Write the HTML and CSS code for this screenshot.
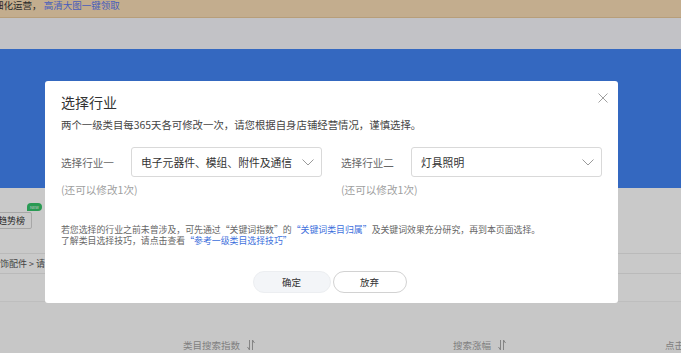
FILE: index.html
```html
<!DOCTYPE html>
<html lang="zh-CN">

<head>
	<meta charset="utf-8">
	<title>选择行业</title>
	<link rel="stylesheet" href="styles.css">
</head>

<body>

	<div class="page">
		<div class="notice">
			<span class="notice-text">细化运营，</span>
			<a class="notice-link" href="#">高清大图一键领取</a>
		</div>
		<div class="nav"></div>
		<div class="hero"></div>

		<div class="tools">
			<button class="trend-btn">趋势榜<span class="badge-new">NEW</span></button>
		</div>

		<div class="crumbs">服饰配件 &gt; 请选择类目</div>

		<div class="table-head">
			<div class="th"></div>
			<div class="th">类目搜索指数
				<svg class="sort-icon" width="10" height="12" viewBox="0 0 10 12">
					<path d="M3.5 1v10M3.5 11L1.5 8M6.5 11V1M6.5 1l2 3" fill="none" stroke="#a8a8a8" stroke-width="1" />
				</svg>
			</div>
			<div class="th">搜索涨幅
				<svg class="sort-icon" width="10" height="12" viewBox="0 0 10 12">
					<path d="M3.5 1v10M3.5 11L1.5 8M6.5 11V1M6.5 1l2 3" fill="none" stroke="#a8a8a8" stroke-width="1" />
				</svg>
			</div>
			<div class="th">点击率</div>
		</div>
	</div>

	<!-- modal: pick the two first-level industries -->
	<div class="mask">
		<div class="dialog">
			<h2 class="dialog-title">选择行业</h2>
			<span class="close-btn">
				<svg width="10" height="10" viewBox="0 0 10 10">
					<path d="M0.5 0.5l9 9M9.5 0.5l-9 9" stroke="#a0a0a0" stroke-width="1" />
				</svg>
			</span>
			<p class="dialog-sub">两个一级类目每365天各可修改一次，请您根据自身店铺经营情况，谨慎选择。</p>

			<div class="field-row select-row">
				<div class="field">
					<span class="field-label">选择行业一</span>
					<div class="select">
						<span>电子元器件、模组、附件及通信</span>
						<svg class="chevron" width="12" height="7" viewBox="0 0 12 7">
							<polyline points="0.5,0.5 6,6 11.5,0.5" fill="none" stroke="#9a9a9a" stroke-width="1" />
						</svg>
					</div>
				</div>
				<div class="field">
					<span class="field-label">选择行业二</span>
					<div class="select">
						<span>灯具照明</span>
						<svg class="chevron" width="12" height="7" viewBox="0 0 12 7">
							<polyline points="0.5,0.5 6,6 11.5,0.5" fill="none" stroke="#9a9a9a" stroke-width="1" />
						</svg>
					</div>
				</div>
			</div>

			<div class="field-row hint-row">
				<p class="hint">(还可以修改1次)</p>
				<p class="hint">(还可以修改1次)</p>
			</div>

			<div class="note">
				<p>若您选择的行业之前未曾涉及，可先通过“关键词指数”的<a href="#">“关键词类目归属”</a>及关键词效果充分研究，再到本页面选择。</p>
				<p>了解类目选择技巧，请点击查看<a href="#">“参考一级类目选择技巧”</a></p>
			</div>

			<div class="dialog-btns">
				<button class="btn btn-ok">确定</button>
				<button class="btn btn-cancel">放弃</button>
			</div>
		</div>
	</div>

</body>

</html>
```

FILE: styles.css
```css
body {
	margin: 0;
	padding: 0;
	width: 681px;
	height: 353px;
	overflow: hidden;
	background-color: #fff;
	font-family: "Noto Sans CJK SC", "Noto Sans", sans-serif;
	color: #333;
}

p {
	margin: 0;
}

a {
	text-decoration: none;
}

/* *** background page *** */
.page {
	width: 100%;
}

.notice {
	height: 18px;
	box-sizing: border-box;
	background-color: #f8dcb4;
	border-bottom: 1px solid #e9c99b;
	font-size: 9.5px;
	line-height: 10px;
	white-space: nowrap;
	overflow: hidden;
}

.notice-text {
	margin-left: -6px;
	color: #333;
}

.notice-link {
	color: #5b77ee;
}

.nav {
	height: 31px;
	background-color: #f7f6fb;
}

.hero {
	height: 139px;
	background-color: #4285f4;
}

.tools {
	padding-top: 17px;
	height: 17px;
}

.trend-btn {
	position: relative;
	margin-left: -9px;
	height: 17px;
	padding: 0 6px;
	border: 1px solid #d4d4d4;
	border-radius: 2px;
	background-color: #fff;
	font-family: inherit;
	font-size: 9px;
	line-height: 15px;
	color: #333;
}

.badge-new {
	position: absolute;
	top: -10px;
	left: 35px;
	width: 15px;
	height: 8px;
	border-radius: 4px 4px 4px 0;
	background-color: #35c46a;
	color: #fff;
	font-size: 4px;
	line-height: 8px;
	text-align: center;
}

.crumbs {
	margin-top: 31px;
	height: 21px;
	box-sizing: border-box;
	border-top: 1px solid #ececec;
	border-bottom: 1px solid #ececec;
	text-indent: -9px;
	font-size: 9px;
	line-height: 19px;
	color: #555;
	white-space: nowrap;
	overflow: hidden;
}

.table-head {
	margin-top: 27px;
	border-top: 1px solid #f2f2f2;
	background-color: #fdfdfd;
	padding-top: 23px;
	height: 40px;
	display: grid;
	grid-template-columns: 183px 270px 212px 200px;
	font-size: 9.5px;
	line-height: 14px;
	color: #a3a3a3;
	white-space: nowrap;
}

.th {
	display: flex;
	align-items: center;
}

.sort-icon {
	margin-left: 6px;
}

/* *** modal *** */
.mask {
	position: fixed;
	top: 0;
	left: 0;
	width: 100%;
	height: 100%;
	background-color: rgba(0, 0, 0, 0.21);
	box-sizing: border-box;
	padding: 81px 0 0 45px;
}

.dialog {
	position: relative;
	width: 573px;
	box-sizing: border-box;
	padding: 12px 16px 10px;
	background-color: #fff;
	border-radius: 3px;
}

.dialog-title {
	margin: 0;
	font-size: 14px;
	line-height: 18px;
	font-weight: normal;
	color: #333;
}

.close-btn {
	position: absolute;
	top: 12px;
	right: 10px;
	width: 10px;
	height: 10px;
	display: flex;
}

.dialog-sub {
	margin-top: 6px;
	font-size: 10.4px;
	line-height: 16px;
	color: #444;
}

.field-row {
	display: grid;
	grid-template-columns: 1fr 1fr;
	column-gap: 19px;
}

.select-row {
	margin-top: 14px;
}

.field {
	display: flex;
	align-items: center;
}

.field-label {
	width: 70px;
	flex-shrink: 0;
	font-size: 10.6px;
	color: #666;
}

.select {
	flex: 1;
	height: 30px;
	box-sizing: border-box;
	border: 1px solid #d9d9d9;
	border-radius: 3px;
	padding: 0 7px 0 9px;
	display: flex;
	align-items: center;
	justify-content: space-between;
	font-size: 10.8px;
	color: #333;
}

.hint-row {
	margin-top: 5px;
}

.hint {
	font-size: 10.6px;
	line-height: 16px;
	color: #a0a0a0;
}

.note {
	margin-top: 26px;
	font-size: 8.9px;
	line-height: 11px;
	color: #666;
}

.note a {
	color: #3d6fdc;
}

.dialog-btns {
	margin-top: 25px;
	display: flex;
	justify-content: center;
	gap: 2px;
}

.btn {
	height: 22px;
	border-radius: 11px;
	font-family: inherit;
	font-size: 9.5px;
	color: #333;
	padding: 0;
	cursor: pointer;
}

.btn-ok {
	width: 78px;
	background-color: #f3f5f8;
	border: 1px solid #eceef1;
	margin-left: -4px;
}

.btn-cancel {
	width: 74px;
	background-color: #fff;
	border: 1px solid #d2d2d2;
}
```
